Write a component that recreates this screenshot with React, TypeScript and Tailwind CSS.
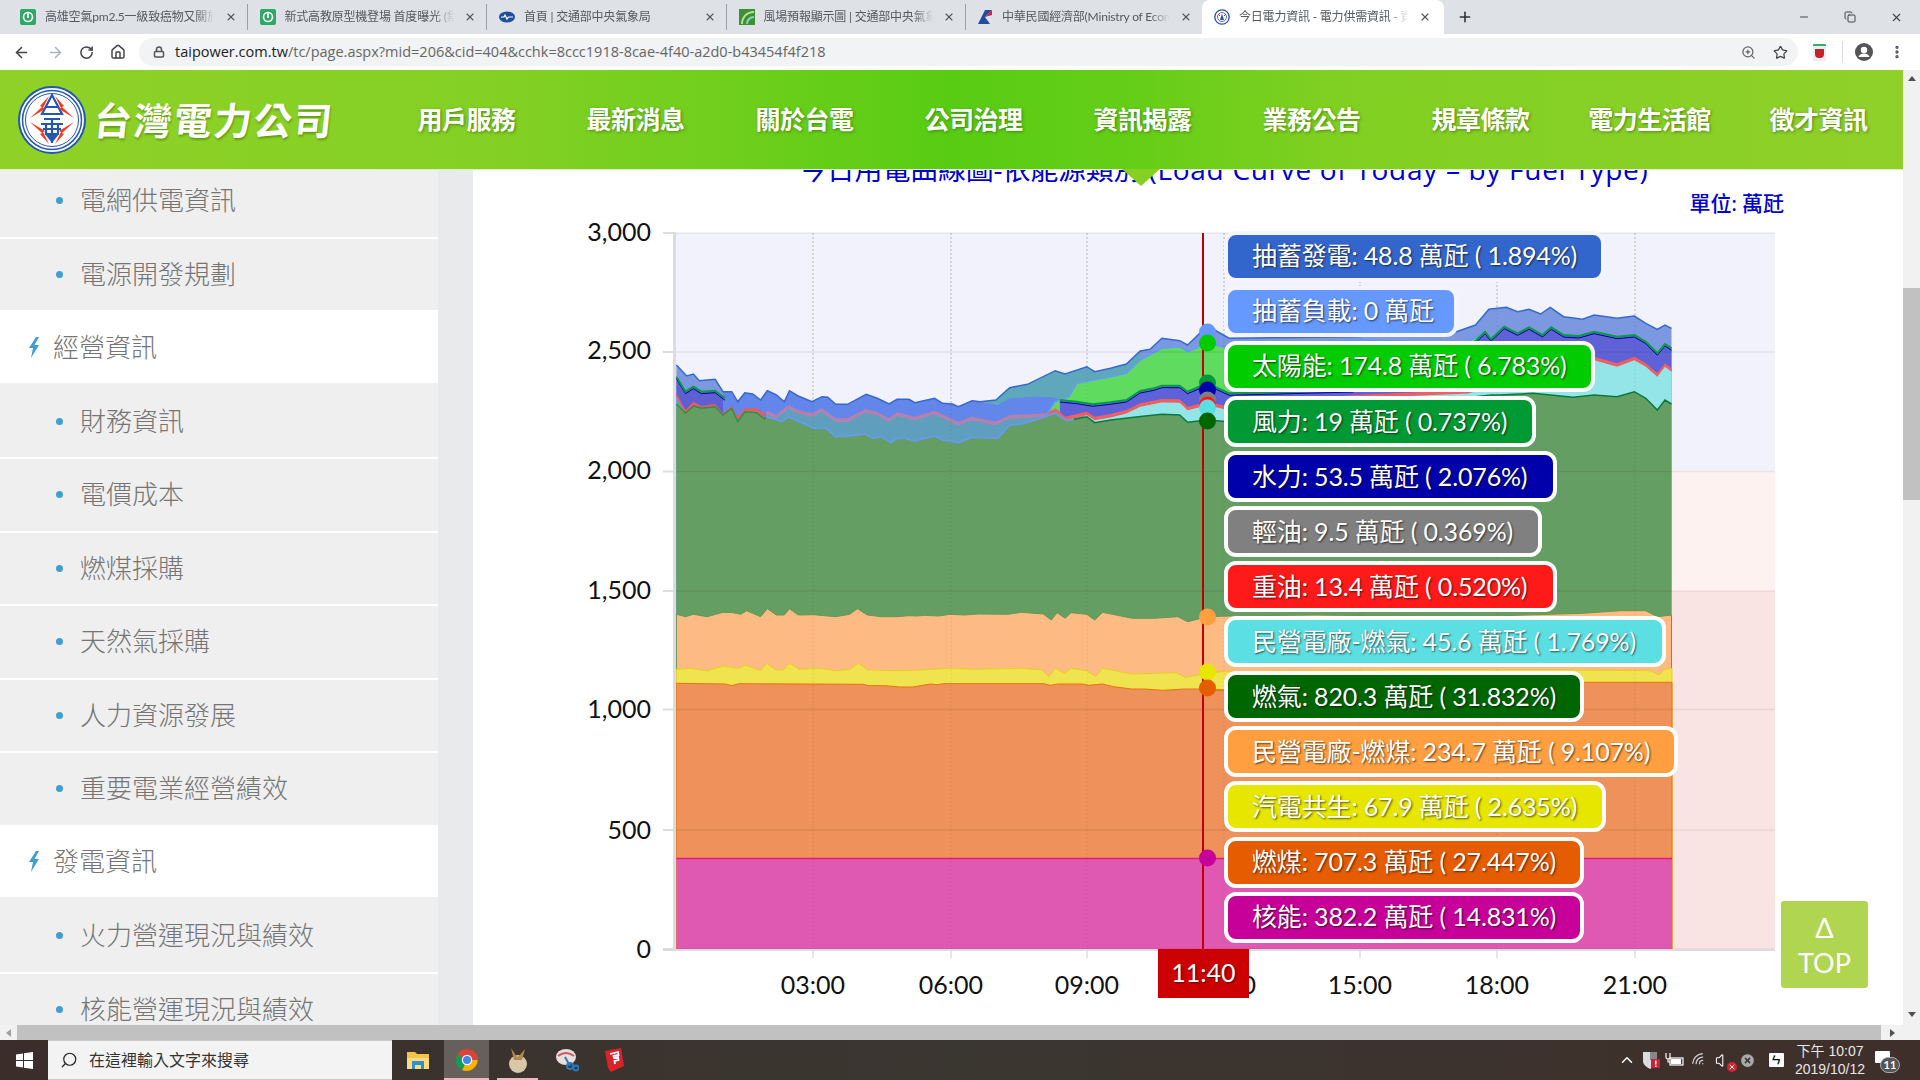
import { ArrowLeft, ArrowRight, ChevronUp, Ellipsis, Home, Lock, Minus, Plus, RotateCw, Search, Star, Volume, Wifi, X, XCircle, ZoomIn, Copy } from "lucide-react";

type P = [number, number];
const z4 = (a: number[][]): P[] => a.map(([x, y]) => [640 + x / 2.529, 220 + y / 3]);
const z5 = (a: number[][]): P[] => a.map(([x, y]) => [1200 + x / 2.613, 220 + y / 3]);
const z6 = (a: number[][]): P[] => a.map(([x, y]) => [560 + x / 2.24, 640 + y / 3]);
const z7 = (a: number[][]): P[] => a.map(([x, y]) => [1200 + x / 2.178, 640 + y / 3]);
const str = (a: P[]) => a.map(([x, y]) => `${x.toFixed(1)},${y.toFixed(1)}`).join(" ");
const BASE = 949;
const area = (a: P[]) => str([...a, [a[a.length - 1][0], BASE], [a[0][0], BASE]]);
const shift = (a: P[], d: number): P[] => a.map(([x, y]) => [x, y + d]);

const T: P[] = [
  ...z4([[92,435],[118,468],[135,462],[150,482],[190,478],[210,515],[232,515],[247,545],[265,518],[285,522],[305,540],[322,512],[345,525],[365,545],[378,512],[400,528],[435,545],[460,530],[475,532],[495,553],[525,553],[572,523],[600,535],[630,552],[650,538],[680,538],[695,548],[745,535],[765,550],[790,552],[805,560],[840,542],[860,545],[900,540],[935,503],[980,493],[1050,452],[1075,462],[1130,440],[1150,455],[1190,445],[1230,432],[1265,393],[1290,388],[1320,355],[1365,362],[1385,375],[1435,318],[1490,355]]),
  ...z5([[76,355],[400,350],[670,335],[720,315],[755,268],[800,262],[830,275],[860,268],[890,282],[915,262],[950,290],[1000,298],[1030,285],[1090,295],[1135,288],[1165,310],[1195,328],[1215,315],[1232,325]]),
];
const teal: P[] = T.filter(([x]) => x >= 640 + 840 / 2.529 && x <= 640 + 1265 / 2.529);
const nightT: P[] = [
  ...T.filter(([x]) => x >= 640 + 208 / 2.529 && x <= 640 + 840 / 2.529),
  ...z4([[905,555],[935,535],[1000,530],[1040,532],[1062,538]]),
];
const Wl: P[] = z4([[92,470],[115,515],[135,500],[155,515],[190,512],[215,535]]);
const Wd: P[] = [
  ...z4([[1062,540],[1105,545],[1145,553],[1190,547],[1230,540],[1265,513],[1300,505],[1320,497],[1365,497],[1385,515],[1435,490],[1490,520]]),
  ...z5([[76,520],[400,510],[700,385],[745,335],[760,358],[795,320],[830,340],[860,322],[895,345],[918,322],[950,345],[990,348],[1030,335],[1090,350],[1135,345],[1165,365],[1195,400],[1215,372],[1232,385]]),
];
const S: P[] = [
  ...z4([[1025,590],[1050,545],[1085,530],[1105,490],[1190,470],[1230,460],[1265,420],[1320,385],[1365,380],[1385,395],[1435,370],[1490,385]]),
  ...z5([[76,385],[400,360],[690,370],[745,340]]),
];
const O: P[] = [
  ...z4([[92,520],[115,570],[135,545],[155,558],[190,552],[210,580],[232,558],[247,590],[265,565],[295,565],[315,582],[322,572],[345,585],[375,555],[400,570],[435,580],[460,565],[495,595],[525,595],[570,567],[600,575],[630,595],[650,577],[695,590],[745,572],[790,597],[805,605],[840,590],[900,605],[935,585],[1000,582],[1025,580],[1052,565],[1075,590],[1130,575],[1150,590],[1190,582],[1230,570],[1265,550],[1320,537],[1365,538],[1385,560],[1435,545],[1490,560]]),
  ...z5([[76,560],[400,525],[700,510],[1030,410],[1060,420],[1090,430],[1135,410],[1165,430],[1195,460],[1215,430],[1232,445]]),
];
const G: P[] = [
  ...z4([[92,552],[115,580],[135,558],[155,565],[190,560],[210,585],[232,565],[247,605],[265,575],[295,578],[315,597],[320,590],[360,605],[375,590],[440,625],[470,625],[495,650],[530,648],[570,642],[590,655],[610,650],[635,668],[650,655],[670,655],[695,663],[745,648],[765,660],[805,668],[840,652],[905,655],[935,615],[965,612],[1000,600],[1050,580],[1080,602],[1130,590],[1150,608],[1190,600],[1260,590],[1320,583],[1365,585],[1385,607],[1435,600],[1490,605]]),
  ...z5([[76,605],[400,540],[720,530],[760,525],[780,525],[870,520],[975,532],[1030,525],[1090,530],[1135,515],[1165,535],[1195,570],[1215,540],[1232,552]]),
];
const PP: P[] = [
  ...z4([[92,1183],[115,1190],[135,1183],[170,1190],[210,1177],[235,1178],[255,1183],[270,1172],[305,1190],[322,1166],[345,1185],[365,1185],[378,1166],[400,1185],[440,1184],[495,1190],[530,1183],[550,1166],[575,1185],[610,1190],[650,1190],[680,1187],[700,1188],[720,1186],[755,1188],[785,1183],[820,1185],[855,1182],[930,1183],[965,1177],[1020,1182],[1040,1200],[1055,1178],[1075,1195],[1090,1178],[1130,1183],[1150,1200],[1170,1177],[1245,1195],[1300,1195],[1360,1190],[1385,1205],[1435,1190],[1490,1188]]),
  ...z5([[76,1188],[300,1185],[700,1190],[1000,1180],[1100,1172],[1165,1172],[1195,1190],[1232,1185]]),
];
const Y: P[] = [
  ...z6([[260,88],[290,85],[330,92],[365,78],[400,85],[415,75],[450,92],[462,70],[485,90],[500,90],[515,70],[535,88],[580,85],[620,92],[650,88],[668,70],[690,90],[750,92],[810,90],[870,85],[930,88],[1030,85],[1080,90],[1095,110],[1110,85],[1130,100],[1145,85],[1180,92],[1200,110],[1215,85],[1280,102],[1380,98],[1400,112],[1450,100],[1480,95]]),
  ...z7([[30,95],[400,90],[800,90],[980,92],[1000,105],[1012,88],[1028,85]]),
];
const C: P[] = [
  ...z6([[260,130],[370,132],[385,137],[400,131],[680,133],[690,137],[730,137],[760,141],[790,141],[830,132],[845,134],[860,131],[1085,131],[1098,136],[1115,132],[1170,132],[1185,136],[1215,132],[1240,140],[1280,147],[1310,147],[1350,151],[1400,147],[1450,147],[1490,152]]),
  ...z7([[30,150],[400,135],[830,127],[1028,127]]),
];
const N: P[] = [[676.5, 858.5], [1672, 858.5]];

const yTicks: [string, number, number][] = [["3,000", 233, 241], ["2,500", 352, 359], ["2,000", 471.5, 479], ["1,500", 591, 599], ["1,000", 709.5, 717.5], ["500", 830, 839], ["0", 949, 958]];
const xTicks: [string, number][] = [["03:00", 813], ["06:00", 951], ["09:00", 1087], ["12:00", 1224], ["15:00", 1360], ["18:00", 1497], ["21:00", 1635]];
const dots: [string, number][] = [["#6699ff", 332], ["#00cc00", 343], ["#009933", 383], ["#0000aa", 390], ["#808080", 400], ["#ff1a1a", 405], ["#5cdfe3", 408], ["#006600", 421], ["#ff9f40", 617], ["#e6e600", 672], ["#e65c00", 688], ["#c60099", 858]];

const tips = [
  { t: "抽蓄發電: 48.8 萬瓩 ( 1.894%)", c: "bg-[#3366cc] border-[#f4f5fc] w-[381px]" },
  { t: "抽蓄負載: 0 萬瓩", c: "bg-[#6699ff] border-[#f4f5fc] w-[234px]" },
  { t: "太陽能: 174.8 萬瓩 ( 6.783%)", c: "bg-[#00cc00] border-white w-[371px]" },
  { t: "風力: 19 萬瓩 ( 0.737%)", c: "bg-[#009933] border-white w-[312px]" },
  { t: "水力: 53.5 萬瓩 ( 2.076%)", c: "bg-[#0000aa] border-white w-[333px]" },
  { t: "輕油: 9.5 萬瓩 ( 0.369%)", c: "bg-[#808080] border-white w-[318px]" },
  { t: "重油: 13.4 萬瓩 ( 0.520%)", c: "bg-[#ff1a1a] border-white w-[333px]" },
  { t: "民營電廠-燃氣: 45.6 萬瓩 ( 1.769%)", c: "bg-[#5cdfe3] border-white w-[442px]" },
  { t: "燃氣: 820.3 萬瓩 ( 31.832%)", c: "bg-[#006600] border-white w-[360px]" },
  { t: "民營電廠-燃煤: 234.7 萬瓩 ( 9.107%)", c: "bg-[#ff9f40] border-white w-[454px]" },
  { t: "汽電共生: 67.9 萬瓩 ( 2.635%)", c: "bg-[#e6e600] border-white w-[382px]" },
  { t: "燃煤: 707.3 萬瓩 ( 27.447%)", c: "bg-[#e65c00] border-white w-[360px]" },
  { t: "核能: 382.2 萬瓩 ( 14.831%)", c: "bg-[#c60099] border-white w-[360px]" },
];

const nav = ["用戶服務", "最新消息", "關於台電", "公司治理", "資訊揭露", "業務公告", "規章條款", "電力生活館", "徵才資訊"];
const side: [string, boolean][] = [
  ["電網供電資訊", false], ["電源開發規劃", false], ["經營資訊", true], ["財務資訊", false], ["電價成本", false], ["燃煤採購", false],
  ["天然氣採購", false], ["人力資源發展", false], ["重要電業經營績效", false], ["發電資訊", true], ["火力營運現況與績效", false], ["核能營運現況與績效", false],
];

function Fav({ kind }: { kind: number }) {
  if (kind === 0)
    return (
      <svg width="16" height="16" viewBox="0 0 16 16">
        <rect width="16" height="16" rx="2" fill="#2ea866" />
        <circle cx="8" cy="8" r="4.5" fill="none" stroke="#fff" strokeWidth="1.6" />
        <path d="M8 4v5" stroke="#fff" strokeWidth="1.6" />
      </svg>
    );
  if (kind === 1)
    return (
      <svg width="16" height="16" viewBox="0 0 16 16">
        <ellipse cx="8" cy="8" rx="8" ry="5.5" fill="#1e4f9c" />
        <path d="M2 8h3l1-2 2 4 1.500-2H14" stroke="#fff" strokeWidth="1.2" fill="none" />
      </svg>
    );
  if (kind === 2)
    return (
      <svg width="16" height="16" viewBox="0 0 16 16">
        <rect width="16" height="16" fill="#3d8f3a" />
        <path d="M3 15C3 8 8 3 15 3" stroke="#bfe08a" strokeWidth="2" fill="none" />
        <path d="M8 15c0-4 3-7 7-7" stroke="#8fd0c0" strokeWidth="2" fill="none" />
      </svg>
    );
  if (kind === 3)
    return (
      <svg width="16" height="16" viewBox="0 0 16 16">
        <path d="M1 15 8 1h7L8 8l5 7z" fill="#1d4ea0" />
        <path d="M8 8l7-7v5z" fill="#d9232e" />
      </svg>
    );
  return (
    <svg width="16" height="16" viewBox="0 0 16 16">
      <circle cx="8" cy="8" r="7.200" fill="#fff" stroke="#2a4fa8" strokeWidth="1.300" />
      <circle cx="8" cy="8" r="4.500" fill="none" stroke="#2a4fa8" strokeWidth="0.800" />
      <path d="M8 4.500 10 11H6z" fill="#2a4fa8" />
      <path d="M4 5l2 2M12 5l-2 2" stroke="#d9232e" strokeWidth="1" />
    </svg>
  );
}

const tabData = [
  { t: "高雄空氣pm2.5一級致癌物又關於", k: 0 },
  { t: "新式高教原型機登場 首度曝光 (集", k: 0 },
  { t: "首頁 | 交通部中央氣象局", k: 1 },
  { t: "風場預報顯示圖 | 交通部中央氣象", k: 2 },
  { t: "中華民國經濟部(Ministry of Econ", k: 3 },
];

function Tab({ t, k, active }: { t: string; k: number; active?: boolean }) {
  return (
    <div className={active ? "flex h-full w-[242px] items-center rounded-t-[8px] bg-white pl-[12px] pr-[10px]" : "flex h-[26px] w-[239.500px] items-center border-r border-[#9aa0a6] pl-[12px] pr-[10px]"}>
      <span className="w-[25px] shrink-0">
        <Fav kind={k} />
      </span>
      <span className="w-[170px] overflow-hidden whitespace-nowrap text-[12px] tracking-[-0.2px] text-[#55585c] [mask-image:linear-gradient(90deg,#000_88%,transparent)]">{t}</span>
      <X className="ml-[10px] shrink-0 text-[#555]" size={12} strokeWidth={2.2} />
    </div>
  );
}

function Emblem() {
  return (
    <svg width="68" height="68" viewBox="0 0 68 68" className="shrink-0">
      <circle cx="34" cy="34" r="33" fill="#fff" stroke="#2457b5" strokeWidth="2" />
      <circle cx="34" cy="34" r="29.500" fill="none" stroke="#2457b5" strokeWidth="1.500" />
      <circle cx="34" cy="34" r="26.500" fill="none" stroke="#2457b5" strokeWidth="1" />
      <path d="M34 9 24 28h20z" fill="none" stroke="#2457b5" strokeWidth="2.200" />
      <path d="M28 21h12M26 33h16M23 38h22M25 43h18M34 33v24M28 38v10h12V38" stroke="#2457b5" strokeWidth="2.200" fill="none" />
      <path d="M34 57 27 48h14z" fill="#2457b5" />
      <path d="M37 10l9 10-2 1 12 11-15-9 2-1zM31 10l-9 10 2 1-12 11 15-9-2-1zM37 58l9-10-2-1 12-11-15 9 2 1zM31 58l-9-10 2-1-12-11 15 9-2 1z" fill="#ef3a1d" />
    </svg>
  );
}

function Chrome() {
  return (
    <svg width="24" height="24" viewBox="0 0 24 24">
      <circle cx="12" cy="12" r="11" fill="#db4437" />
      <path d="M12 12 22.500 12A11 11 0 0 1 7 22z" fill="#f4b400" />
      <path d="M12 12 7 22A11 11 0 0 1 2.500 6.500z" fill="#0f9d58" />
      <circle cx="12" cy="12" r="5.200" fill="#fff" />
      <circle cx="12" cy="12" r="4" fill="#4285f4" />
    </svg>
  );
}

function Bolt() {
  return (
    <svg width="12" height="21" viewBox="0 0 12 21" className="mr-[13px] shrink-0">
      <path d="M8 0 1 11h4l-2 10 8-13H6.500L11 0z" fill="#3f9fd0" />
    </svg>
  );
}

function Chart() {
  return (
    <svg viewBox="473 170 1430 855" width="1430" height="855" className="absolute left-0 top-0">
      <defs>
        <linearGradient id="oilG" gradientUnits="userSpaceOnUse" x1="676" x2="1672" y1="0" y2="0">
          <stop offset="0.09" stopColor="#ea5a5c" />
          <stop offset="0.09" stopColor="#b87fae" />
          <stop offset="0.37" stopColor="#b87fae" />
          <stop offset="0.37" stopColor="#ef5f62" />
        </linearGradient>
        <linearGradient id="cG" gradientUnits="userSpaceOnUse" x1="676" x2="1672" y1="0" y2="0">
          <stop offset="0.41" stopColor="#5f9fbd" />
          <stop offset="0.41" stopColor="#93e5e8" />
        </linearGradient>
        <linearGradient id="gS" gradientUnits="userSpaceOnUse" x1="676" x2="1672" y1="0" y2="0">
          <stop offset="0.09" stopColor="#2f8f4a" />
          <stop offset="0.09" stopColor="#6699ff" />
          <stop offset="0.4" stopColor="#6699ff" />
          <stop offset="0.4" stopColor="#0a7a3a" />
        </linearGradient>
      </defs>
      <rect x="676" y="233" width="1099" height="238.500" fill="#f1f2fb" />
      <rect x="676" y="471.500" width="1099" height="119.500" fill="#fdf2f0" />
      <rect x="676" y="591" width="1099" height="358" fill="#fae3e3" />
      {xTicks.map(([, x]) => (
        <line key={x} x1={x} x2={x} y1={233} y2={949} stroke="#c2c2d2" strokeWidth="1" strokeDasharray="2 2" />
      ))}
      <polygon points={area(T)} fill="#7b98e0" />
      <polygon points={area(teal)} fill="#5fa8bb" />
      <polygon points={area(Wl)} fill="#5f5fd4" />
      <polygon points={area(nightT)} fill="#6286ea" />
      <polygon points={area(S)} fill="#5fdc60" />
      <polygon points={area(Wd)} fill="#5f62d6" />
      <polygon points={area(shift(O, 3))} fill="#93e5e8" />
      <polygon points={area(shift(O, 3))} fill="url(#cG)" />
      <polygon points={[...O, ...shift(O, 3.500).reverse()].map(([x, y]) => `${x.toFixed(1)},${y.toFixed(1)}`).join(" ")} fill="url(#oilG)" />
      <polygon points={area(G)} fill="#659e63" />
      <polyline points={str(T)} fill="none" stroke="#3569cf" strokeWidth="1.500" />
      <polyline points={str(S)} fill="none" stroke="#6699ff" strokeWidth="1.500" />
      <polyline points={str(shift(Wd, 2))} fill="none" stroke="#0000a0" strokeWidth="1" />
      <polyline points={str(Wd)} fill="none" stroke="#0a9a45" strokeWidth="2" />
      <polyline points={str(shift(Wl, 2))} fill="none" stroke="#0000a0" strokeWidth="1" />
      <polyline points={str(Wl)} fill="none" stroke="#0a9a45" strokeWidth="2" />
      <polyline points={str(G)} fill="none" stroke="url(#gS)" strokeWidth="1.500" />
      <polygon points={area(PP)} fill="#fdba82" stroke="#6a9650" strokeWidth="1" />
      <polygon points={area(Y)} fill="#efe350" stroke="#e8cf1e" strokeWidth="1" />
      <polygon points={area(C)} fill="#ee915a" stroke="#e77410" strokeWidth="1" />
      <polygon points={area(N)} fill="#df59b3" />
      <polyline points={str(N)} fill="none" stroke="#df1f7a" strokeWidth="1.500" />
      {xTicks.map(([, x]) => (
        <line key={x} x1={x} x2={x} y1={233} y2={949} stroke="#000" strokeOpacity="0.07" strokeWidth="1" strokeDasharray="2 2" />
      ))}
      {yTicks.map(([l, y, ty]) => (
        <g key={l}>
          <line x1={676} x2={1775} y1={y} y2={y} stroke="#000" strokeOpacity="0.07" strokeWidth="1.500" />
          <line x1={663} x2={676} y1={y} y2={y} stroke="#dddde0" strokeWidth="2" />
          <text x={651} y={ty} textAnchor="end" fontSize="25" fill="#111">{l}</text>
        </g>
      ))}
      <rect x="673" y="233" width="3" height="718" fill="#dcdce0" />
      <rect x="663" y="949" width="1112" height="2" fill="#dcdce0" />
      {xTicks.map(([l, x]) => (
        <g key={l}>
          <line x1={x} x2={x} y1={950} y2={958} stroke="#dddde0" strokeWidth="1.500" />
          <text x={x} y={994} textAnchor="middle" fontSize="25" fill="#111">{l}</text>
        </g>
      ))}
      <line x1={1203} x2={1203} y1={233} y2={949} stroke="#c00000" strokeWidth="2" />
      {dots.map(([c, y]) => (
        <circle key={c} cx={1207.500} cy={y} r={8.500} fill={c} />
      ))}
    </svg>
  );
}

export default function App() {
  return (
    <div className="flex h-[1080px] w-[1920px] flex-col overflow-hidden bg-white font-[Lato,'Noto_Sans_CJK_TC',sans-serif]">
      {/* tab strip */}
      <div className="flex h-[34px] shrink-0 items-end bg-[#dee1e6] pl-[8px]">
        <div className="flex h-[26px] items-center self-center">
          {tabData.slice(0, 4).map((t) => (
            <Tab key={t.t} t={t.t} k={t.k} />
          ))}
          <div className="flex h-[26px] w-[236px] items-center pl-[11px] pr-[10px]">
            <span className="w-[25px] shrink-0"><Fav kind={3} /></span>
            <span className="w-[170px] overflow-hidden whitespace-nowrap text-[12px] tracking-[-0.2px] text-[#55585c] [mask-image:linear-gradient(90deg,#000_88%,transparent)]">{tabData[4].t}</span>
            <X className="ml-[10px] shrink-0 text-[#555]" size={12} strokeWidth={2.2} />
          </div>
        </div>
        <Tab t="今日電力資訊 - 電力供需資訊 - 資" k={4} active />
        <Plus className="mb-[9px] ml-[13px] text-[#333]" size={16} strokeWidth={2.4} />
        <div className="ml-auto flex h-full items-center gap-[34px] pr-[17px] text-[#444]">
          <Minus size={12} />
          <Copy size={12} />
          <X size={13} />
        </div>
      </div>
      {/* toolbar */}
      <div className="flex h-[36px] shrink-0 items-center bg-white pl-[13px] text-[#5f6368]">
        <ArrowLeft size={17} strokeWidth={2.2} className="text-[#444]" />
        <ArrowRight size={17} strokeWidth={2.2} className="ml-[17px] text-[#b0b3b7]" />
        <RotateCw size={15} strokeWidth={2.4} className="ml-[15px] text-[#444]" />
        <Home size={16} strokeWidth={2.2} className="ml-[16px] text-[#444]" />
        <div className="ml-[13px] flex h-[28px] w-[1659px] items-center rounded-full bg-[#f1f3f4] pl-[14px] pr-[10px]">
          <Lock size={12} strokeWidth={3} className="text-[#555]" />
          <span className="ml-[10px] whitespace-nowrap text-[14.500px] text-[#666] font-['Open_Sans',sans-serif]">
            <span className="text-[#222]">taipower.com.tw</span>/tc/page.aspx?mid=206&amp;cid=404&amp;cchk=8ccc1918-8cae-4f40-a2d0-b43454f4f218
          </span>
          <ZoomIn size={15} className="ml-auto text-[#666]" />
          <Star size={15} strokeWidth={2} className="ml-[17px] text-[#444]" />
        </div>
        <div className="ml-[15px] flex h-[17px] w-[13px] items-center justify-center rounded-[1px] border-t-2 border-[#27b36a] bg-[#eee]">
          <span className="h-[9px] w-[9px] rounded-b-[4px] bg-[#c4232d]" />
        </div>
        <span className="ml-[16px] h-[22px] w-px bg-[#ddd]" />
        <svg width="18" height="18" viewBox="0 0 18 18" className="ml-[12px] shrink-0">
          <circle cx="9" cy="9" r="9" fill="#555" />
          <circle cx="9" cy="7" r="3.200" fill="#fff" />
          <path d="M3.500 14c1-3 3-3.500 5.500-3.500s4.500.5 5.500 3.500" fill="#fff" />
        </svg>
        <Ellipsis size={16} className="ml-[16px] rotate-90 text-[#555]" strokeWidth={3} />
      </div>

      {/* page */}
      <div className="flex min-h-0 flex-1 flex-col">
        <div className="flex min-h-0 flex-1">
          <div className="flex min-w-0 flex-1 flex-col overflow-hidden">
            <header className="relative z-10 flex h-[100px] shrink-0 items-center border-b border-[#e2f0c0] bg-[linear-gradient(90deg,#8fd127_0%,#85d024_25%,#70cf1c_38%,#58cc13_50%,#66ce17_60%,#80d021_70%,#90d02a_100%)]">
              <div className="flex w-[382px] items-center pl-[18px]">
                <Emblem />
                <span className="ml-[8px] -skew-x-6 whitespace-nowrap text-[38px] font-bold leading-none tracking-[2px] text-white [text-shadow:1px_2px_2px_rgba(60,90,0,0.45)]">台灣電力公司</span>
              </div>
              <nav className="flex flex-1">
                {nav.map((n) => (
                  <span key={n} className="w-[169px] text-center text-[25px] font-bold tracking-[-0.5px] text-white [text-shadow:1px_1px_3px_rgba(40,70,0,0.55)]">{n}</span>
                ))}
              </nav>
              <span className="absolute left-[1122px] top-full border-x-[19px] border-t-[17px] border-x-transparent border-t-[#86d023]" />
            </header>
            <div className="flex min-h-0 flex-1">
              <aside className="w-[438px] shrink-0 overflow-hidden bg-[#e9eaec]">
                <div className="-mt-[5px]">
                  {side.map(([t, g]) =>
                    g ? (
                      <div key={t} className="flex h-[73.500px] items-center border-b-[3px] border-[#efeff0] bg-white pl-[28px] text-[26px] font-light text-[#757575]">
                        <Bolt />
                        {t}
                      </div>
                    ) : (
                      <div key={t} className="flex h-[73.500px] items-center border-b-[2px] border-white bg-[#efeff0] pl-[56px] text-[26px] font-light text-[#757575]">
                        <span className="mr-[17px] h-[7px] w-[7px] rounded-full bg-[#3f9fd0]" />
                        {t}
                      </div>
                    ),
                  )}
                </div>
              </aside>
              <div className="w-[35px] shrink-0 bg-[#e9eaec]" />
              <main className="relative min-w-0 flex-1 overflow-hidden bg-white">
                <div className="-mt-[21px] whitespace-nowrap pl-[326px] text-[28px] leading-[40px] text-[#0000cc] font-['Open_Sans','Noto_Sans_CJK_TC',sans-serif] tracking-[-0.2px]">今日用電曲線圖-依能源類別 <span className="tracking-[0.7px]">(Load Curve of Today – by Fuel Type)</span></div>
                <div className="pr-[119px] text-right text-[21px] font-medium leading-[28px] text-[#0000cc]">單位: 萬瓩</div>
                <Chart />
                <div className="absolute left-[751px] top-[60.500px] flex flex-col gap-[4.100px]">
                  {tips.map((t) => (
                    <div key={t.t} className={`flex h-[51px] items-center whitespace-nowrap rounded-[12px] border-[4px] pl-[24px] text-[25px] tracking-[-0.15px] text-white [text-shadow:1px_1px_2px_rgba(0,0,0,0.65)] ${t.c}`}>
                      {t.t}
                    </div>
                  ))}
                </div>
                <div className="absolute left-[685px] top-[779px] flex h-[49px] w-[91px] items-center justify-center bg-[#cc0000] pb-[2px] text-[25px] text-white [text-shadow:1px_1px_2px_rgba(0,0,0,0.6)]">11:40</div>
                <button className="absolute left-[1308px] top-[731px] flex h-[87px] w-[87px] flex-col items-center justify-center rounded-[3px] bg-[#b0d651] text-[27px] leading-[35px] text-white">
                  <span>Δ</span>
                  <span>TOP</span>
                </button>
              </main>
            </div>
          </div>
          {/* vertical scrollbar */}
          <div className="relative flex w-[17px] shrink-0 flex-col items-center justify-between bg-[#f1f1f1] py-[6px]">
            <span className="border-x-[4px] border-b-[5px] border-x-transparent border-b-[#505050]" />
            <span className="absolute left-0 top-[218px] h-[212px] w-full bg-[#c1c1c1]" />
            <span className="mb-[2px] border-x-[4px] border-t-[5px] border-x-transparent border-t-[#505050]" />
          </div>
        </div>
        {/* horizontal scrollbar */}
        <div className="flex h-[15px] shrink-0 items-center bg-[#f1f1f1]">
          <div className="flex w-[17px] shrink-0 justify-center">
            <span className="border-y-[4px] border-r-[5px] border-y-transparent border-r-[#a0a0a0]" />
          </div>
          <div className="h-full w-[1864px] bg-[#c1c1c1]" />
          <div className="flex w-[22px] shrink-0 justify-center">
            <span className="border-y-[4px] border-l-[5px] border-y-transparent border-l-[#505050]" />
          </div>
        </div>
      </div>

      {/* taskbar */}
      <div className="flex h-[40px] shrink-0 items-center bg-[linear-gradient(90deg,#3b2e2a,#3a3630_50%,#3f2f2a)]">
        <div className="flex w-[48px] justify-center">
          <svg width="17" height="17" viewBox="0 0 17 17" fill="#fff">
            <path d="M0 2.400 7 1.400V8H0zM8 1.200 17 0v8H8zM0 9h7v6.600L0 14.600zM8 9h9v8l-9-1.300z" />
          </svg>
        </div>
        <div className="flex h-full w-[344px] items-center border-y border-[#ccc] bg-[#f3f3f3] pl-[12px] text-[16px] text-[#333]">
          <Search size={18} strokeWidth={1.6} className="-scale-x-100 text-[#222]" />
          <span className="ml-[11px]">在這裡輸入文字來搜尋</span>
        </div>
        <div className="flex h-full w-[52px] items-center justify-center">
          <svg width="22" height="22" viewBox="0 0 22 22">
            <path d="M0 3h8l2 2h12v15H0z" fill="#f6c34a" />
            <path d="M0 9h22v11H0z" fill="#fbdc7e" />
            <path d="M5 12h12v8h-3v-4H8v4H5z" fill="#2f8fd8" />
          </svg>
        </div>
        <div className="relative flex h-full w-[45px] items-center justify-center bg-[#665f5c]">
          <Chrome />
          <span className="absolute bottom-0 left-0 h-[2px] w-full bg-[#f4b6bd]" />
        </div>
        <div className="relative ml-[8px] flex h-full w-[41px] items-center justify-center">
          <svg width="22" height="26" viewBox="0 0 22 26">
            <ellipse cx="11" cy="17" rx="9" ry="9" fill="#d8c8a8" />
            <path d="M4 1l6 9 2-1 6-7-3 11H7z" fill="#b0884a" />
          </svg>
          <span className="absolute bottom-0 left-0 h-[2px] w-full bg-[#f4b6bd]" />
        </div>
        <div className="ml-[4px] flex h-full w-[49px] items-center justify-center">
          <svg width="24" height="24" viewBox="0 0 24 24">
            <ellipse cx="11" cy="9" rx="10" ry="8" fill="#e8e0dc" />
            <path d="M3 8q8-6 16 0" stroke="#c85a6a" strokeWidth="2" fill="none" />
            <circle cx="15" cy="18" r="3" fill="none" stroke="#2a7ac0" strokeWidth="2" />
            <circle cx="21" cy="20" r="2.500" fill="none" stroke="#2a7ac0" strokeWidth="1.800" />
            <path d="M10 9l5 9" stroke="#2a7ac0" strokeWidth="2" />
          </svg>
        </div>
        <div className="flex h-full w-[46px] items-center justify-center">
          <svg width="22" height="26" viewBox="0 0 22 26">
            <path d="M2 4 18 1l3 18-13 6-3-4z" fill="#d8232a" />
            <path d="M7 7l8-2 .5 3-5 1 .5 2 4-1 .5 3-4 1 .5 3" stroke="#fff" strokeWidth="1.800" fill="none" />
          </svg>
        </div>
        <div className="ml-auto flex h-full items-center text-white">
          <span className="flex w-[24px] justify-center"><ChevronUp size={18} /></span>
          <span className="flex w-[24px] justify-center">
            <svg width="18" height="20" viewBox="0 0 18 20">
              <path d="M1 2h14v9c0 4-4 6-7 8-3-2-7-4-7-8z" fill="#ddd" />
              <path d="M8 2h7v8H8z" fill="#888" />
              <rect x="9" y="9" width="9" height="9" fill="#c8233a" />
              <rect x="13" y="10.500" width="1.500" height="4" fill="#fff" />
              <rect x="13" y="15.500" width="1.500" height="1.500" fill="#fff" />
            </svg>
          </span>
          <span className="flex w-[24px] justify-center">
            <svg width="20" height="16" viewBox="0 0 20 16" fill="none" stroke="#fff" strokeWidth="1.200">
              <rect x="5" y="6" width="13" height="7" />
              <rect x="6.500" y="7.500" width="9" height="4" fill="#fff" />
              <path d="M1 1v4a2 2 0 0 0 4 0V1M3 7v3h2" />
            </svg>
          </span>
          <span className="flex w-[24px] justify-center"><Wifi size={16} className="rotate-[-45deg] text-[#ccc]" /></span>
          <span className="flex w-[24px] justify-center">
            <span className="relative">
              <Volume size={17} strokeWidth={1.5} />
              <span className="absolute -bottom-[3px] -right-[5px] flex h-[10px] w-[10px] items-center justify-center rounded-full bg-[#d8232f]">
                <X size={8} strokeWidth={3} />
              </span>
            </span>
          </span>
          <span className="flex w-[24px] justify-center"><XCircle size={17} className="fill-[#aaa] text-[#3a3630]" /></span>
          <span className="ml-[5px] flex w-[24px] justify-center">
            <span className="flex h-[14px] w-[15px] items-center justify-center rounded-[1px] bg-white text-[10px] font-bold leading-none text-black">ㄣ</span>
          </span>
          <div className="ml-[6px] flex w-[72px] flex-col items-center whitespace-nowrap text-[14px] leading-[18px] text-[#e8e8e8] font-['Liberation_Sans','Noto_Sans_CJK_TC',sans-serif]">
            <span>下午 10:07</span>
            <span>2019/10/12</span>
          </div>
          <div className="relative ml-[9px] mr-[21px] h-[26px] w-[24px]">
            <div className="mt-[4px] h-[12px] w-[15px] rounded-[1px] bg-white" />
            <span className="absolute -right-[1px] bottom-0 flex h-[16px] w-[20px] items-center justify-center rounded-full border border-[#aaa] bg-[#555] text-[11px] font-bold text-white">11</span>
          </div>
        </div>
      </div>
    </div>
  );
}
